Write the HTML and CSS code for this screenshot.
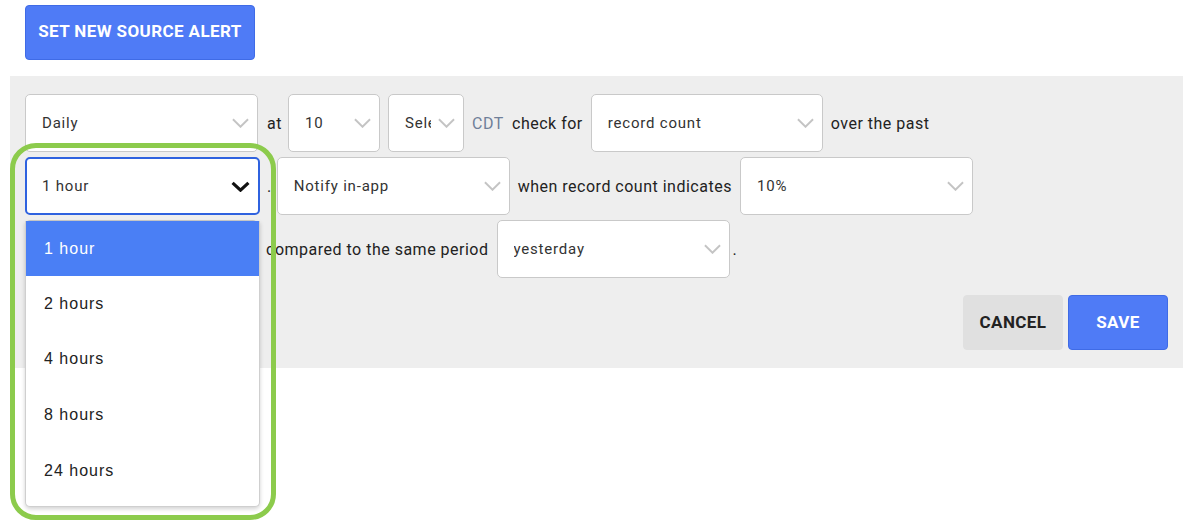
FILE: index.html
```html
<!DOCTYPE html>
<html>
<head>
<meta charset="utf-8">
<link rel="stylesheet" href="styles.css">
</head>
<body>
<div class="top">
  <button class="btn btn-primary btn-new">SET NEW SOURCE ALERT</button>
</div>
<div class="panel">
  <div class="row">
    <div class="select w233"><span class="val">Daily</span><svg class="chev" viewBox="0 0 18 10"><path d="M1 1 L9 9 L17 1"/></svg></div>
    <span class="lbl lbl-at">at</span>
    <div class="select w92"><span class="val">10</span><svg class="chev" viewBox="0 0 18 10"><path d="M1 1 L9 9 L17 1"/></svg></div>
    <div class="select w76"><span class="val clip">Select</span><svg class="chev" viewBox="0 0 18 10"><path d="M1 1 L9 9 L17 1"/></svg></div>
    <span class="lbl tz">CDT</span>
    <span class="lbl">check for</span>
    <div class="select w232"><span class="val">record count</span><svg class="chev" viewBox="0 0 18 10"><path d="M1 1 L9 9 L17 1"/></svg></div>
    <span class="lbl">over the past</span>
  </div>
  <div class="row">
    <div class="select w235 focused"><span class="val">1 hour</span><svg class="chev chev-dark" viewBox="0 0 18 10"><path d="M1.5 1.5 L9 8.5 L16.5 1.5"/></svg></div>
    <span class="lbl lbl-dot">.</span>
    <div class="select w233"><span class="val">Notify in-app</span><svg class="chev" viewBox="0 0 18 10"><path d="M1 1 L9 9 L17 1"/></svg></div>
    <span class="lbl">when record count indicates</span>
    <div class="select w233"><span class="val">10%</span><svg class="chev" viewBox="0 0 18 10"><path d="M1 1 L9 9 L17 1"/></svg></div>
  </div>
  <div class="row">
    <div class="select w233"><span class="val"></span><svg class="chev" viewBox="0 0 18 10"><path d="M1 1 L9 9 L17 1"/></svg></div>
    <span class="lbl">compared to the same period</span>
    <div class="select w233"><span class="val">yesterday</span><svg class="chev" viewBox="0 0 18 10"><path d="M1 1 L9 9 L17 1"/></svg></div>
    <span class="lbl lbl-end">.</span>
  </div>
  <div class="actions">
    <button class="btn btn-cancel">CANCEL</button>
    <button class="btn btn-primary btn-save">SAVE</button>
  </div>
</div>
<ul class="menu">
  <li class="opt active">1 hour</li>
  <li class="opt">2 hours</li>
  <li class="opt">4 hours</li>
  <li class="opt">8 hours</li>
  <li class="opt">24 hours</li>
</ul>
<div class="highlight"></div>
</body>
</html>
```

FILE: styles.css
```css
* { box-sizing: border-box; }
html, body { margin: 0; padding: 0; background: #ffffff; }
body {
  width: 1193px;
  height: 522px;
  position: relative;
  overflow: hidden;
  font-family: Roboto, "Liberation Sans", Arial, sans-serif;
  color: #222;
}
.top { padding: 5px 25px 0; height: 76px; }
.btn {
  font-family: Roboto, "Liberation Sans", Arial, sans-serif;
  font-weight: 700;
  font-size: 17px;
  letter-spacing: 0.4px;
  border-radius: 4px;
  cursor: pointer;
  padding: 0 0 2px;
}
.btn-primary {
  background: #4f7bf6;
  border: 1px solid #3f6be6;
  color: #fff;
}
.btn-new { width: 230px; height: 55px; padding-bottom: 4px; }
.panel {
  margin: 0 10px;
  background: #eeeeee;
  padding: 18px 15px 18px 15px;
  height: 292px;
  display: flex;
  flex-direction: column;
  gap: 5px;
}
.row {
  display: flex;
  align-items: center;
  gap: 8px;
  height: 58px;
}
.select {
  height: 58px;
  background: #fff;
  border: 1px solid #c9c9c9;
  border-radius: 5px;
  display: flex;
  align-items: center;
  padding: 0 8px 0 16px;
  flex: none;
  position: relative;
}
.select .val {
  flex: 1;
  min-width: 0;
  font-size: 15px;
  letter-spacing: 0.8px;
  color: #333;
  white-space: nowrap;
  overflow: hidden;
}
.select .val.clip { margin-right: 7px; }
.chev {
  width: 17px;
  height: 10px;
  flex: none;
  fill: none;
  stroke: #c4c4c4;
  stroke-width: 2;
}
.chev-dark {
  width: 19px;
  height: 11px;
  stroke: #111;
  stroke-width: 3;
}
.select.focused {
  border: 2px solid #2f62df;
  padding-left: 15px;
}
.w233 { width: 233px; }
.w235 { width: 235px; }
.w232 { width: 232px; }
.w92 { width: 92px; }
.w76 { width: 76px; }
.lbl {
  font-size: 16px;
  letter-spacing: 0.5px;
  color: #222;
  white-space: nowrap;
}
.lbl-at { margin: 0 -2px 0 1px; }
.lbl-dot { margin: 0 -3px 0 -1px; }
.lbl-end { margin-left: -5px; }
.tz { color: #6f7f99; letter-spacing: 0.6px; font-size: 16px; }
.actions {
  margin-top: 12px;
  display: flex;
  justify-content: flex-end;
  gap: 5px;
}
.btn-cancel {
  width: 100px;
  height: 55px;
  background: #e0e0e0;
  border: 1px solid #e0e0e0;
  color: #222;
}
.btn-save { width: 100px; height: 55px; }
.menu {
  position: absolute;
  left: 25px;
  top: 221px;
  width: 235px;
  height: 286px;
  margin: 0;
  padding: 0 0 6px;
  list-style: none;
  background: #fff;
  border: 1px solid #cfcfcf;
  border-top: none;
  border-radius: 0 0 5px 5px;
  box-shadow: 0 2px 4px rgba(0,0,0,0.18);
}
.opt {
  height: 55.6px;
  display: flex;
  align-items: center;
  padding-left: 18px;
  font-family: "Liberation Sans", Arial, sans-serif;
  font-size: 16px;
  letter-spacing: 1px;
  color: #222;
}
.opt.active {
  background: #4a7ff5;
  color: #fff;
  height: 55px;
}
.highlight {
  position: absolute;
  left: 10px;
  top: 143px;
  width: 266px;
  height: 377px;
  border: 5px solid #8ccb4c;
  border-radius: 26px;
  pointer-events: none;
}
```
